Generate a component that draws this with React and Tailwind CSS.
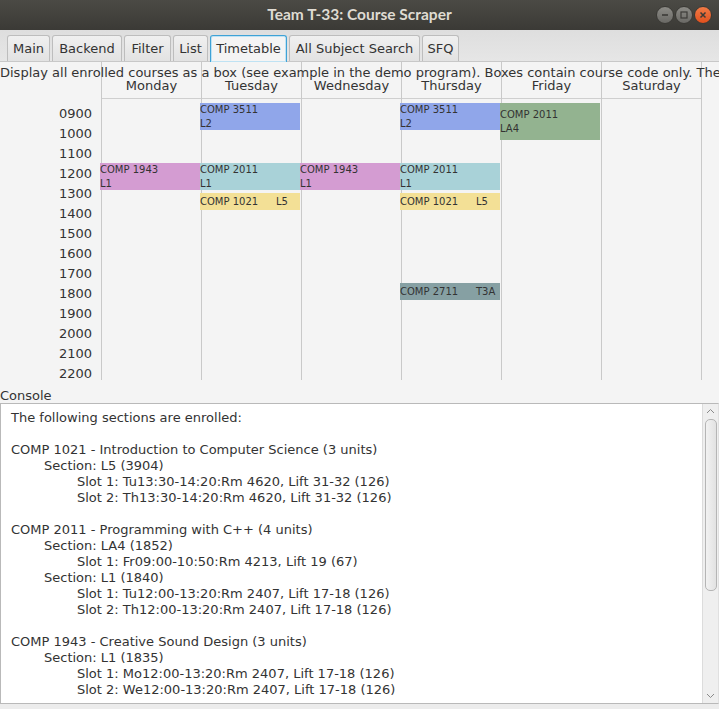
import React from "react";

const TABS = [
  { label: "Main", w: "w-[43px]" },
  { label: "Backend", w: "w-[70px]" },
  { label: "Filter", w: "w-[47px]" },
  { label: "List", w: "w-[35px]" },
  { label: "Timetable", w: "w-[77px]", active: true },
  { label: "All Subject Search", w: "w-[131px]" },
  { label: "SFQ", w: "w-[37px]" },
];

const DAYS = ["Monday", "Tuesday", "Wednesday", "Thursday", "Friday", "Saturday"];
const HOURS = ["0900", "1000", "1100", "1200", "1300", "1400", "1500", "1600", "1700", "1800", "1900", "2000", "2100", "2200"];

// day: 0 = Monday, times in hours
const BOXES = [
  { day: 1, start: 9, end: 10 + 20 / 60, code: "COMP 3511", sec: "L2", color: "bg-[#90a6ea]" },
  { day: 3, start: 9, end: 10 + 20 / 60, code: "COMP 3511", sec: "L2", color: "bg-[#90a6ea]" },
  { day: 0, start: 12, end: 13 + 20 / 60, code: "COMP 1943", sec: "L1", color: "bg-[#d49cd2]" },
  { day: 2, start: 12, end: 13 + 20 / 60, code: "COMP 1943", sec: "L1", color: "bg-[#d49cd2]" },
  { day: 1, start: 12, end: 13 + 20 / 60, code: "COMP 2011", sec: "L1", color: "bg-[#a9d2d8]" },
  { day: 3, start: 12, end: 13 + 20 / 60, code: "COMP 2011", sec: "L1", color: "bg-[#a9d2d8]" },
  { day: 1, start: 13.5, end: 14 + 20 / 60, code: "COMP 1021", sec: "L5", color: "bg-[#f3e096]" },
  { day: 3, start: 13.5, end: 14 + 20 / 60, code: "COMP 1021", sec: "L5", color: "bg-[#f3e096]" },
  { day: 4, start: 9, end: 10 + 50 / 60, code: "COMP 2011", sec: "LA4", color: "bg-[#93b390]" },
  { day: 3, start: 18, end: 18 + 50 / 60, code: "COMP 2711", sec: "T3A", color: "bg-[#86a0a3]" },
];

const CONSOLE = [
  [0, "The following sections are enrolled:"],
  [0, ""],
  [0, "COMP 1021 - Introduction to Computer Science (3 units)"],
  [1, "Section: L5 (3904)"],
  [2, "Slot 1: Tu13:30-14:20:Rm 4620, Lift 31-32 (126)"],
  [2, "Slot 2: Th13:30-14:20:Rm 4620, Lift 31-32 (126)"],
  [0, ""],
  [0, "COMP 2011 - Programming with C++ (4 units)"],
  [1, "Section: LA4 (1852)"],
  [2, "Slot 1: Fr09:00-10:50:Rm 4213, Lift 19 (67)"],
  [1, "Section: L1 (1840)"],
  [2, "Slot 1: Tu12:00-13:20:Rm 2407, Lift 17-18 (126)"],
  [2, "Slot 2: Th12:00-13:20:Rm 2407, Lift 17-18 (126)"],
  [0, ""],
  [0, "COMP 1943 - Creative Sound Design (3 units)"],
  [1, "Section: L1 (1835)"],
  [2, "Slot 1: Mo12:00-13:20:Rm 2407, Lift 17-18 (126)"],
  [2, "Slot 2: We12:00-13:20:Rm 2407, Lift 17-18 (126)"],
];

const INDENT = ["pl-[10px]", "pl-[43px]", "pl-[76px]"];

function TitleBar() {
  return (
    <div className="relative h-[30px] shrink-0 flex items-center justify-center bg-gradient-to-b from-[#4b4a45] to-[#3b3a36]">
      <span className="font-['Lato',sans-serif] font-bold text-[15.5px] text-[#dfdbd2]">
        Team T-33: Course Scraper
      </span>
      <div className="absolute right-[7px] top-[6px] flex gap-[1px]">
        <div className="w-[18px] h-[18px] rounded-full bg-gradient-to-b from-[#8c8b86] to-[#6a6965] border border-[#3a3935] flex items-center justify-center">
          <svg width="10" height="10" viewBox="0 0 10 10"><path d="M2 5h6" stroke="#3c3b37" strokeWidth="1.6" /></svg>
        </div>
        <div className="w-[18px] h-[18px] rounded-full bg-gradient-to-b from-[#8c8b86] to-[#6a6965] border border-[#3a3935] flex items-center justify-center">
          <svg width="10" height="10" viewBox="0 0 10 10"><rect x="2" y="2" width="6" height="6" fill="none" stroke="#3c3b37" strokeWidth="1.2" /></svg>
        </div>
        <div className="w-[18px] h-[18px] rounded-full bg-gradient-to-b from-[#f27a45] to-[#e0501c] border border-[#3a3935] flex items-center justify-center">
          <svg width="10" height="10" viewBox="0 0 10 10"><path d="M2.5 2.5l5 5M7.5 2.5l-5 5" stroke="#3c3b37" strokeWidth="1.5" /></svg>
        </div>
      </div>
    </div>
  );
}

function TabBar() {
  return (
    <div className="h-[32px] shrink-0 flex items-end gap-[2px] pl-[7px] bg-gradient-to-b from-[#dedede] to-[#e6e6e6] border-b border-[#c8c8c8]">
      {TABS.map((t) => (
        <div
          key={t.label}
          className={`${t.w} h-[26px] flex items-center justify-center rounded-t-[3px] text-[13px] text-[#333] ${
            t.active
              ? "bg-[#f4f4f4] border border-b-0 border-[#3fa2d6] shadow-[inset_0_0_0_1px_#bfe2f3] h-[27px] -mb-px"
              : "bg-gradient-to-b from-[#f0f0f0] to-[#e2e2e2] border border-b-0 border-[#bdbdbd]"
          }`}
        >
          {t.label}
        </div>
      ))}
    </div>
  );
}

function CourseBox({ box }) {
  const top = 4 + (box.start - 9) * 20;
  const height = Math.round((box.end - box.start) * 20);
  const tall = height > 20;
  return (
    <div
      className={`absolute left-[-2px] w-[100px] ${box.color} text-[10px] text-[#333] leading-[13.5px] flex overflow-hidden ${
        tall ? "flex-col justify-center" : "items-center"
      }`}
      style={{ top, height }}
    >
      {tall ? (
        <>
          <span>{box.code}</span>
          <span>{box.sec}</span>
        </>
      ) : (
        <>
          <span className="w-[76px]">{box.code}</span>
          <span>{box.sec}</span>
        </>
      )}
    </div>
  );
}

function Timetable() {
  return (
    <div className="relative h-[318px] shrink-0 flex">
      <div className="w-[101px] shrink-0 pt-[42px] pr-[9px] flex flex-col items-end">
        {HOURS.map((h) => (
          <div key={h} className="h-[20px] leading-[20px] text-[13px] text-[#333]">{h}</div>
        ))}
      </div>
      {DAYS.map((d, i) => (
        <div key={d} className="w-[100px] shrink-0 border-l border-[#c9c9c9] flex flex-col">
          <div className="h-[37px] border-b border-[#cfcfcf] flex items-end justify-center pb-[4px] text-[13px] leading-[16px] text-[#333]">
            {d}
          </div>
          <div className="relative flex-1">
            {BOXES.filter((b) => b.day === i).map((b, k) => (
              <CourseBox key={k} box={b} />
            ))}
          </div>
        </div>
      ))}
      <div className="flex-1 border-l border-[#c9c9c9]" />
      <div className="absolute left-0 top-[3px] whitespace-nowrap text-[13px] leading-[16px] text-[#333]">
        Display all enrolled courses as a box (see example in the demo program). Boxes contain course code only. The course
      </div>
    </div>
  );
}

function Console() {
  return (
    <>
      <div className="h-[23px] shrink-0 pt-[8px] text-[13px] leading-[15px] text-[#333]">Console</div>
      <div className="h-[301px] shrink-0 flex border border-[#b9b9b9] border-r-[#e0e0e0] bg-white">
        <div className="flex-1 pt-[6px] overflow-hidden">
          {CONSOLE.map(([lvl, text], i) => (
            <div key={i} className={`${INDENT[lvl]} h-[16px] leading-[16px] text-[13px] text-[#333] whitespace-pre`}>
              {text}
            </div>
          ))}
        </div>
        <div className="w-[16px] shrink-0 bg-[#efefef] border-l border-[#dcdcdc] flex flex-col items-center">
          <svg className="mt-[4px]" width="9" height="6" viewBox="0 0 9 6"><path d="M1 5l3.5-3.5L8 5" fill="none" stroke="#8a8a8a" strokeWidth="1" /></svg>
          <div className="mt-[5px] w-[12px] h-[172px] rounded-[5px] border border-[#b5b5b5] bg-gradient-to-r from-[#f2f2f2] to-[#e2e2e2]" />
          <div className="flex-1" />
          <svg className="mb-[4px]" width="9" height="6" viewBox="0 0 9 6"><path d="M1 1l3.5 3.5L8 1" fill="none" stroke="#8a8a8a" strokeWidth="1" /></svg>
        </div>
      </div>
      <div className="flex-1 bg-[#ececec]" />
    </>
  );
}

export default function App() {
  return (
    <div className="w-[719px] h-[709px] overflow-hidden flex flex-col bg-[#f4f4f4] font-['DejaVu_Sans',sans-serif]">
      <TitleBar />
      <TabBar />
      <Timetable />
      <Console />
    </div>
  );
}
